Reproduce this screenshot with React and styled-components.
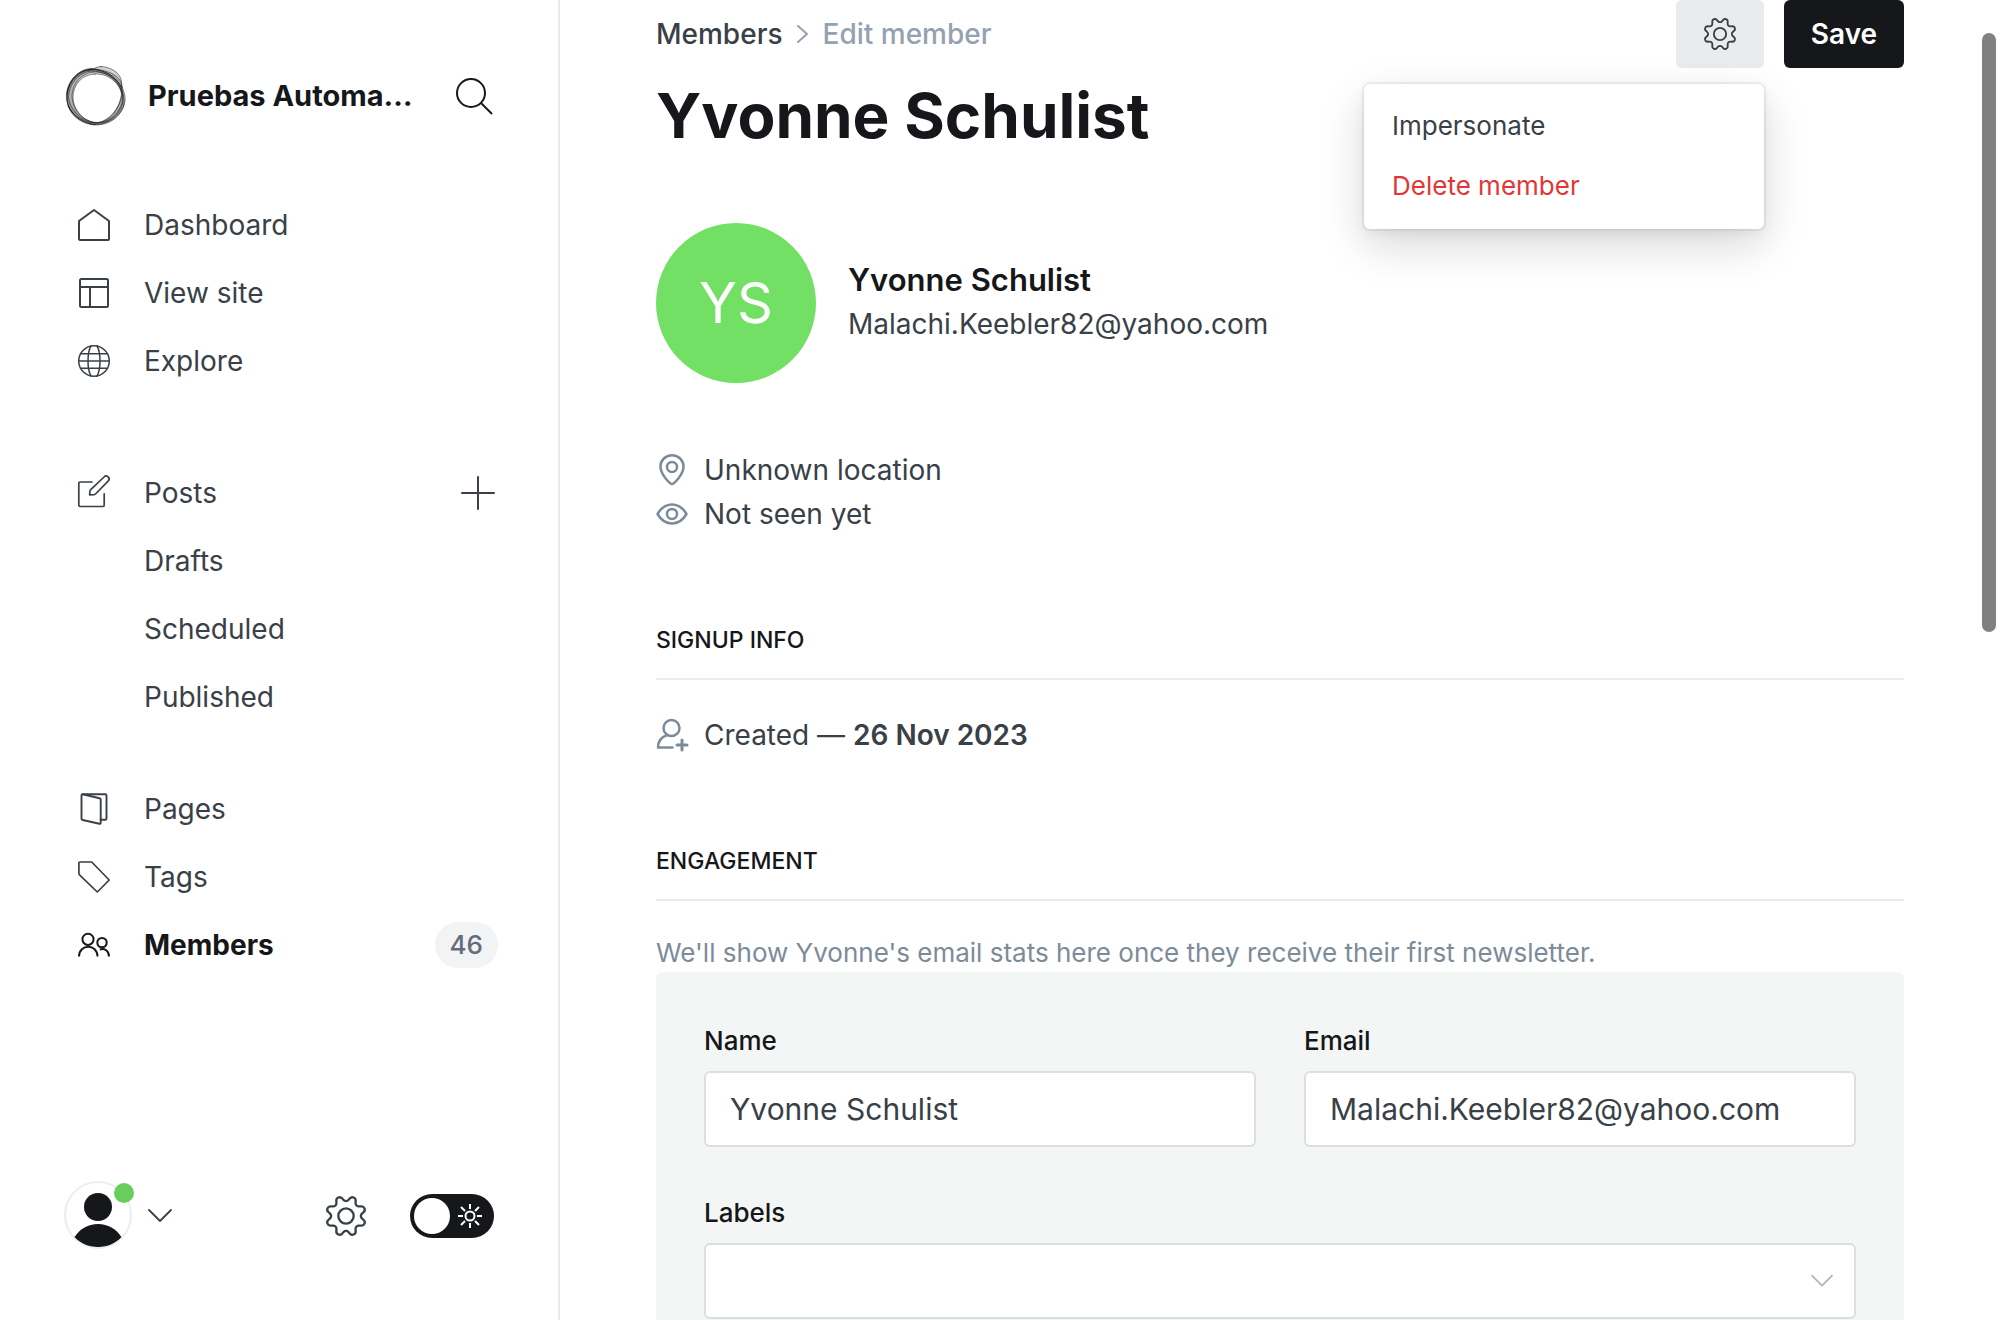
import React from "react";
import styled, { createGlobalStyle } from "styled-components";

const ink = "#15171a";
const text = "#394047";
const mid = "#7c8b9a";
const line = "#ebeced";

const GlobalStyle = createGlobalStyle`
  *, *::before, *::after { box-sizing: border-box; }
  body {
    margin: 0;
    background: #fff;
    color: ${text};
    font-family: Inter, "Liberation Sans", sans-serif;
    font-size: 28px;
    line-height: 44px;
    -webkit-font-smoothing: antialiased;
  }
  h1, h2, h3, p, ul { margin: 0; padding: 0; }
  ul { list-style: none; }
  a { color: inherit; text-decoration: none; }
  button, input, select { font: inherit; color: inherit; }
  button { border: 0; background: none; padding: 0; cursor: pointer; }
  svg { display: block; flex: none; overflow: visible; }
`;

/* Layout */

const Shell = styled.div`
  display: flex;
  height: 100vh;
  overflow: hidden;
`;

const Sidebar = styled.aside`
  flex: none;
  width: 560px;
  display: flex;
  flex-direction: column;
  border-right: 2px solid #e9eaeb;
  padding: 64px 60px 69px 64px;
`;

const Main = styled.main`
  flex: 1;
  min-width: 0;
  overflow-y: auto;
  scrollbar-width: none;
  padding: 0 96px;
`;

const ScrollThumb = styled.div`
  position: fixed;
  top: 33px;
  right: 4px;
  width: 14px;
  height: 599px;
  border-radius: 7px;
  background: #808080;
`;

/* Sidebar */

const Brand = styled.header`
  display: flex;
  align-items: center;
  height: 64px;
  margin-bottom: 63px;
`;

const SiteName = styled.span`
  flex: 1;
  min-width: 0;
  margin-left: 20px;
  font-size: 29px;
  font-weight: 700;
  color: ${ink};
  white-space: nowrap;
`;

const SearchButton = styled.button`
  margin-right: 5px;
  color: ${ink};
`;

const Nav = styled.nav`
  flex: 1;
  display: flex;
  flex-direction: column;
`;

const NavGroup = styled.ul`
  margin-bottom: ${(p) => p.$gap || 0}px;
`;

const NavRow = styled.li`
  display: flex;
  align-items: center;
  justify-content: space-between;
  height: 68px;
`;

const NavLink = styled.a`
  display: flex;
  align-items: center;
  gap: 34px;
  padding-left: ${(p) => (p.$nested ? 80 : 14)}px;
  color: ${(p) => (p.$active ? ink : text)};
  font-weight: ${(p) => (p.$active ? 700 : 400)};
`;

const AddButton = styled.button`
  margin-right: 3px;
`;

const Count = styled.span`
  padding: 0 15px;
  line-height: 46px;
  border-radius: 23px;
  background: #f1f3f4;
  color: #626d79;
  font-size: 26px;
  font-weight: 500;
`;

const Footer = styled.footer`
  display: flex;
  align-items: center;
`;

const AccountButton = styled.button`
  display: flex;
  align-items: center;
  gap: 15px;
  margin-right: auto;
`;

const Portrait = styled.span`
  position: relative;
  width: 70px;
  height: 70px;
`;

const OnlineDot = styled.span`
  position: absolute;
  top: 2px;
  right: 0;
  width: 20px;
  height: 20px;
  border-radius: 50%;
  background: #69cd5b;
`;

const ModeSwitch = styled.label`
  position: relative;
  margin: 0 4px 0 44px;
  color: #fff;
  height: 44px;
  svg { position: absolute; top: 10px; right: 12px; pointer-events: none; }
`;

const SwitchInput = styled.input`
  appearance: none;
  display: block;
  margin: 0;
  width: 84px;
  height: 44px;
  padding: 4px;
  border-radius: 22px;
  background: ${ink};
  cursor: pointer;
  &::before {
    content: "";
    display: block;
    width: 36px;
    height: 36px;
    border-radius: 50%;
    background: #fff;
  }
`;

/* Page header */

const TopBar = styled.header`
  display: flex;
  align-items: center;
  justify-content: space-between;
  height: 68px;
`;

const Crumbs = styled.nav`
  display: flex;
  align-items: center;
  gap: 14px;
  font-weight: 500;
  color: #95a1b1;
  a { color: ${text}; }
`;

const Actions = styled.div`
  display: flex;
  gap: 20px;
`;

const MenuWrap = styled.div`
  position: relative;
`;

const Button = styled.button`
  display: flex;
  align-items: center;
  justify-content: center;
  width: ${(p) => (p.$primary ? 120 : 88)}px;
  height: 68px;
  border-radius: 6px;
  background: ${(p) => (p.$primary ? ink : "#e9ebec")};
  color: ${(p) => (p.$primary ? "#fff" : text)};
  font-weight: 600;
`;

const Menu = styled.ul`
  position: absolute;
  top: 84px;
  right: 0;
  width: 400px;
  padding: 12px 0 13px;
  border-radius: 6px;
  background: #fff;
  box-shadow: 0 0 0 2px rgba(0, 0, 0, 0.05), 0 16px 44px rgba(0, 0, 0, 0.16),
    0 4px 12px rgba(0, 0, 0, 0.05);
`;

const MenuItem = styled.button`
  display: block;
  width: 100%;
  height: 60px;
  padding: 0 28px;
  text-align: left;
  font-size: 26px;
  color: ${(p) => (p.$danger ? "#e23636" : text)};
`;

const Title = styled.h1`
  padding: 8px 0 67px;
  color: ${ink};
  font-size: 62px;
  line-height: 80px;
  font-weight: 700;
`;

/* Member details */

const Profile = styled.section`
  display: flex;
  align-items: center;
  gap: 32px;
`;

const Initials = styled.div`
  display: flex;
  align-items: center;
  justify-content: center;
  width: 160px;
  height: 160px;
  border-radius: 50%;
  background: #72e064;
  color: #fff;
  font-size: 56px;
`;

const MemberName = styled.h2`
  color: ${ink};
  font-size: 31px;
  line-height: 44px;
  font-weight: 600;
`;

const MemberEmail = styled.p`
  padding-bottom: 2px;
`;

const Facts = styled.ul`
  margin: ${(p) => p.$top}px 0 ${(p) => p.$bottom}px;
`;

const Fact = styled.li`
  display: flex;
  align-items: center;
  gap: 16px;
  svg { color: ${mid}; }
  strong { font-weight: 600; }
`;

const SectionTitle = styled.h3`
  padding: 0 0 16px;
  border-bottom: 2px solid ${line};
  color: ${ink};
  font-size: 23px;
  font-weight: 500;
  text-transform: uppercase;
`;

const Note = styled.p`
  padding-top: 32px;
  line-height: 39px;
  color: ${mid};
  font-size: 26px;
`;

/* Form */

const Panel = styled.form`
  display: grid;
  grid-template-columns: 1fr 1fr;
  gap: 44px 48px;
  padding: 47px 48px 48px;
  border-radius: 6px;
  background: #f4f6f6;
`;

const Field = styled.div`
  grid-column: span ${(p) => p.$span || 1};
`;

const Label = styled.label`
  display: block;
  margin-bottom: 8px;
  color: ${ink};
  font-size: 26px;
  font-weight: 500;
`;

const Input = styled.input`
  appearance: none;
  display: block;
  width: 100%;
  height: 76px;
  padding: 0 24px;
  border: 2px solid #dcdfdf;
  border-radius: 6px;
  background: #fff;
  font-size: 30px;
  outline: 0;
`;

const SelectWrap = styled.div`
  position: relative;
  svg { position: absolute; top: 32px; right: 24px; color: #aeb7c1; pointer-events: none; }
`;

/* Icons */

const Svg = ({ w = 32, h = w, box = `0 0 ${w} ${h}`, sw = 2, children, ...rest }) => (
  <svg width={w} height={h} viewBox={box} fill="none" stroke="currentColor" strokeWidth={sw}
    strokeLinecap="round" strokeLinejoin="round" aria-hidden="true" {...rest}>
    {children}
  </svg>
);

const LogoIcon = () => (
  <Svg w={64} sw={1}>
    <g stroke="#111" strokeOpacity="0.5" fill="#222" fillOpacity="0.2" fillRule="evenodd">
      <path d="M27 4.500C34 5 56 8 57.500 21C58 30 62 36 59 44C54 55 44 61 31 61C17 60 4 51 3.500 36C2 19 13 5 27 4.500Z M29 8C17 9 9 20 8 31C8 47 20 58 33 58.500C46 58 55 46 57.500 30C57 18 44 7 29 8Z" />
      <path d="M37 2.500C47 3 57 9 57.500 18C58 26 62 30 61 37C59 51 45 60 33 60.500C18 60 2 49 2.500 31C3 16 15 6 26 5.500C30 5 33 2.500 37 2.500Z M26 7C14 9 5 20 4.500 33C6 47 19 58.500 33 59C47 59 60 45 58.500 31C56 17 42 6 26 7Z" />
      <path d="M25 6C38 3 55 13 58 26C62 39 56 53 41 58C24 63 5 51 3 37C1 22 12 8 25 6Z M31 10C18 10 9 21 9 33C9 46 20 58 33 59C45 57 56 44 58 31C56 20 45 9 31 10Z" />
    </g>
    <path d="M4 42C10 54 21 60 31 60.500M3 30C5 16 15 6 27 5.500C38 5 52 12 58 24" stroke="#111" strokeOpacity="0.7" />
  </Svg>
);
const SearchIcon = () => (
  <Svg w={38} sw={2} strokeLinecap="butt">
    <circle cx="16" cy="16" r="14" /><path d="M26 26L37 37" />
  </Svg>
);
const HomeIcon = () => (
  <Svg><path d="M16 1L31 12V30a1 1 0 0 1-1 1H2a1 1 0 0 1-1-1V12Z" /></Svg>
);
const LayoutIcon = () => (
  <Svg><rect x="2" y="2" width="28" height="28" rx="1.5" /><path d="M2 10H30M12 10V30" /></Svg>
);
const GlobeIcon = () => (
  <Svg sw={1.5}>
    <circle cx="16" cy="16" r="15.3" />
    <path d="M13 .9C9 8 9 24 13 31.100M19 .9C23 8 23 24 19 31.100M2.500 8.700H29.500M.7 16H31.300M2.500 23.300H29.500" />
  </Svg>
);
const EditIcon = () => (
  <Svg sw={1.7}>
    <path d="M14 5H2a1.200 1.200 0 0 0-1.200 1.200V28.300a1.200 1.200 0 0 0 1.200 1.200H25a1.200 1.200 0 0 0 1.200-1.200V16.800" />
    <path d="M11.600 17.800L12 13.800Q12.200 13 13 12.300L26 0A2.800 2.800 0 0 1 30.300 3.900L18 16.500Q17 17.500 16 17.700Z" />
  </Svg>
);
const PagesIcon = () => (
  <Svg sw={1.9}>
    <path d="M22.700 26.700H27.500A1.200 1.200 0 0 0 28.500 25.500V2.500A1.200 1.200 0 0 0 27.500 1.200H4.500" />
    <path d="M4.800 1.300L21.500 5.200a1.500 1.500 0 0 1 1.200 1.400V29.800a1 1 0 0 1-1.300 1L4.700 27a1.500 1.500 0 0 1-1.200-1.400V2.300a1 1 0 0 1 1.300-1Z" />
  </Svg>
);
const TagIcon = () => (
  <Svg sw={1.7}><path d="M.9 2a1 1 0 0 1 1-1H13.700L31.200 19L19.300 31L1.500 13.800Q.9 13 .9 12Z" /></Svg>
);
const MembersIcon = () => (
  <Svg strokeLinecap="butt">
    <circle cx="10" cy="10.300" r="5.600" /><circle cx="24" cy="13.600" r="4.700" />
    <path d="M1 27.500C1 14.500 19.500 14.500 19.500 27.500M21.800 20.600C26.500 18.800 31 22 31 27.500" />
  </Svg>
);
const PlusIcon = () => (<Svg w={34}><path d="M17 1V33M1 17H33" /></Svg>);
const GearIcon = ({ size }) => (
  <Svg w={size} box="0 0 24 24" sw={1.4}>
    <path d="M10.546 2.438a1.957 1.957 0 0 0 2.908 0L14.400 1.400a1.959 1.959 0 0 1 3.410 1.413l-.071 1.400a1.958 1.958 0 0 0 2.051 2.054l1.400-.071a1.959 1.959 0 0 1 1.410 3.410l-1.042.940a1.960 1.960 0 0 0 0 2.909l1.042.940a1.959 1.959 0 0 1-1.413 3.410l-1.400-.071a1.958 1.958 0 0 0-2.056 2.056l.071 1.400A1.959 1.959 0 0 1 14.400 22.600l-.941-1.041a1.959 1.959 0 0 0-2.908 0L9.606 22.600A1.959 1.959 0 0 1 6.200 21.192l.072-1.400a1.958 1.958 0 0 0-2.056-2.056l-1.400.071A1.958 1.958 0 0 1 1.400 14.400l1.041-.940a1.960 1.960 0 0 0 0-2.909L1.400 9.606A1.958 1.958 0 0 1 2.809 6.200l1.400.071a1.958 1.958 0 0 0 2.058-2.060L6.200 2.810A1.959 1.959 0 0 1 9.606 1.400Z" />
    <circle cx="12" cy="12" r="4.600" />
  </Svg>
);
const ChevronIcon = ({ w = 22, sw = 1.8 }) => (
  <Svg w={w} h={12} box="0 0 22 12" sw={sw}><path d="M0 0L11 11L22 0" /></Svg>
);
const CrumbIcon = () => (<Svg w={12} h={20}><path d="M1 2L10 10L1 18" /></Svg>);
const SunIcon = () => (
  <Svg w={24} strokeLinecap="butt">
    <circle cx="12" cy="12" r="4.500" />
    <path d="M12 0V5M12 19V24M0 12H5M19 12H24M3 3L7 7M17 17L21 21M21 3L17 7M7 17L3 21" />
  </Svg>
);
const PersonIcon = () => (
  <Svg w={70} stroke="none">
    <circle cx="34" cy="34" r="33" stroke="#ebeef0" strokeWidth="2" />
    <circle cx="34" cy="26" r="14" fill={ink} />
    <path d="M10.500 56C16 48 24 43 34 43S52 48 57.500 56C52 62 44 66 34 66S16 62 10.500 56Z" fill={ink} />
  </Svg>
);
const PinIcon = () => (
  <Svg sw={2.500}>
    <path d="M16 30C14.500 30 4.500 21 4.500 12.500A11.500 11.300 0 0 1 27.500 12.500C27.500 21 17.500 30 16 30Z" />
    <circle cx="16" cy="13" r="5" />
  </Svg>
);
const EyeIcon = () => (
  <Svg sw={2.500}>
    <path d="M1.500 16C5 10 10 6.500 16 6.500S27 10 30.500 16C27 22 22 25.500 16 25.500S5 22 1.500 16Z" />
    <circle cx="16" cy="16" r="5" />
  </Svg>
);
const PersonAddIcon = () => (
  <Svg sw={2.500}>
    <circle cx="15.500" cy="9" r="8" /><path d="M11 16.200C5 18 2 22 2 28.500H16.500" />
    <path d="M21 26H31M26 21V31" strokeWidth="3" />
  </Svg>
);

const navGroups = [
  { gap: 64, items: [
    { label: "Dashboard", icon: <HomeIcon /> },
    { label: "View site", icon: <LayoutIcon /> },
    { label: "Explore", icon: <GlobeIcon /> },
  ] },
  { gap: 44, items: [
    { label: "Posts", icon: <EditIcon />, add: true },
    { label: "Drafts" },
    { label: "Scheduled" },
    { label: "Published" },
  ] },
  { items: [
    { label: "Pages", icon: <PagesIcon /> },
    { label: "Tags", icon: <TagIcon /> },
    { label: "Members", icon: <MembersIcon />, active: true, count: 46 },
  ] },
];

export default function App() {
  return (
    <>
      <GlobalStyle />
      <Shell>
        <Sidebar>
          <Brand>
            <LogoIcon />
            <SiteName>Pruebas Automa…</SiteName>
            <SearchButton type="button" aria-label="Search"><SearchIcon /></SearchButton>
          </Brand>
          <Nav>
            {navGroups.map((group, i) => (
              <NavGroup key={i} $gap={group.gap}>
                {group.items.map((item) => (
                  <NavRow key={item.label}>
                    <NavLink href="#" $nested={!item.icon} $active={item.active}>
                      {item.icon}
                      {item.label}
                    </NavLink>
                    {item.add && <AddButton type="button" aria-label="New post"><PlusIcon /></AddButton>}
                    {item.count && <Count>{item.count}</Count>}
                  </NavRow>
                ))}
              </NavGroup>
            ))}
          </Nav>
          <Footer>
            <AccountButton type="button" aria-label="Account">
              <Portrait><PersonIcon /><OnlineDot /></Portrait>
              <ChevronIcon />
            </AccountButton>
            <a href="#" aria-label="Settings"><GearIcon size={40} /></a>
            <ModeSwitch>
              <SwitchInput type="checkbox" role="switch" aria-label="Night mode" />
              <SunIcon />
            </ModeSwitch>
          </Footer>
        </Sidebar>

        <Main>
          <TopBar>
            <Crumbs aria-label="Breadcrumb">
              <a href="#">Members</a>
              <CrumbIcon />
              <span>Edit member</span>
            </Crumbs>
            <Actions>
              <MenuWrap>
                <Button type="button" aria-label="Member actions"><GearIcon size={32} /></Button>
                <Menu>
                  <li><MenuItem type="button">Impersonate</MenuItem></li>
                  <li><MenuItem type="button" $danger>Delete member</MenuItem></li>
                </Menu>
              </MenuWrap>
              <Button type="button" $primary>Save</Button>
            </Actions>
          </TopBar>
          <Title>Yvonne Schulist</Title>

          <Profile>
            <Initials>YS</Initials>
            <div>
              <MemberName>Yvonne Schulist</MemberName>
              <MemberEmail>Malachi.Keebler82@yahoo.com</MemberEmail>
            </div>
          </Profile>
          <Facts $top={65} $bottom={82}>
            <Fact><PinIcon />Unknown location</Fact>
            <Fact><EyeIcon />Not seen yet</Fact>
          </Facts>

          <SectionTitle>Signup info</SectionTitle>
          <Facts $top={33} $bottom={82}>
            <Fact><PersonAddIcon /><span>Created — <strong>26 Nov 2023</strong></span></Fact>
          </Facts>

          <SectionTitle>Engagement</SectionTitle>
          <Note>We'll show Yvonne's email stats here once they receive their first newsletter.</Note>

          <Panel>
            <Field>
              <Label htmlFor="name">Name</Label>
              <Input id="name" type="text" defaultValue="Yvonne Schulist" />
            </Field>
            <Field>
              <Label htmlFor="email">Email</Label>
              <Input id="email" type="email" defaultValue="Malachi.Keebler82@yahoo.com" />
            </Field>
            <Field $span={2}>
              <Label htmlFor="labels">Labels</Label>
              <SelectWrap>
                <Input as="select" id="labels" defaultValue="">
                  <option value="" />
                </Input>
                <ChevronIcon w={20} sw={2} />
              </SelectWrap>
            </Field>
          </Panel>
        </Main>
        <ScrollThumb aria-hidden="true" />
      </Shell>
    </>
  );
}
